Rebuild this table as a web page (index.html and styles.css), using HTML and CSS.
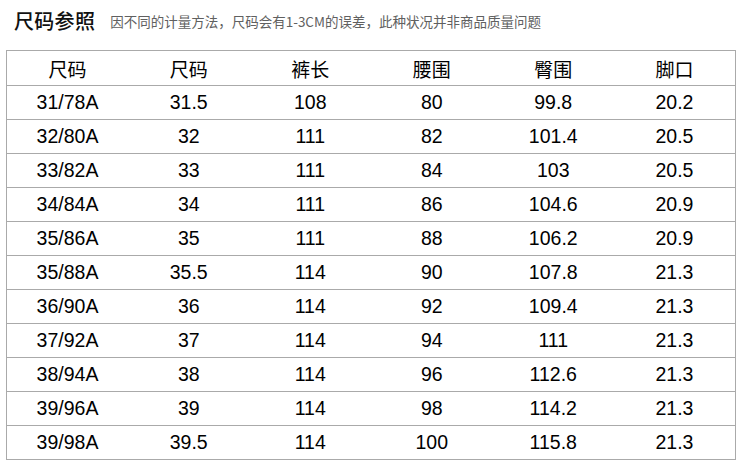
FILE: index.html
```html
<!DOCTYPE html>
<html lang="zh">
<head>
<meta charset="utf-8">
<link rel="stylesheet" href="styles.css">
</head>
<body>
<div class="page">
  <div class="heading">
    <span class="title">尺码参照</span>
    <span class="note">因不同的计量方法，尺码会有1-3CM的误差，此种状况并非商品质量问题</span>
  </div>
  <table class="sizes">
    <thead>
      <tr><th>尺码</th><th>尺码</th><th>裤长</th><th>腰围</th><th>臀围</th><th>脚口</th></tr>
    </thead>
    <tbody>
      <tr><td>31/78A</td><td>31.5</td><td>108</td><td>80</td><td>99.8</td><td>20.2</td></tr>
      <tr><td>32/80A</td><td>32</td><td>111</td><td>82</td><td>101.4</td><td>20.5</td></tr>
      <tr><td>33/82A</td><td>33</td><td>111</td><td>84</td><td>103</td><td>20.5</td></tr>
      <tr><td>34/84A</td><td>34</td><td>111</td><td>86</td><td>104.6</td><td>20.9</td></tr>
      <tr><td>35/86A</td><td>35</td><td>111</td><td>88</td><td>106.2</td><td>20.9</td></tr>
      <tr><td>35/88A</td><td>35.5</td><td>114</td><td>90</td><td>107.8</td><td>21.3</td></tr>
      <tr><td>36/90A</td><td>36</td><td>114</td><td>92</td><td>109.4</td><td>21.3</td></tr>
      <tr><td>37/92A</td><td>37</td><td>114</td><td>94</td><td>111</td><td>21.3</td></tr>
      <tr><td>38/94A</td><td>38</td><td>114</td><td>96</td><td>112.6</td><td>21.3</td></tr>
      <tr><td>39/96A</td><td>39</td><td>114</td><td>98</td><td>114.2</td><td>21.3</td></tr>
      <tr><td>39/98A</td><td>39.5</td><td>114</td><td>100</td><td>115.8</td><td>21.3</td></tr>
    </tbody>
  </table>
</div>
</body>
</html>
```
FILE: styles.css
```css
html, body {
  margin: 0;
  padding: 0;
  background: #ffffff;
}
.page {
  padding: 0 0 0 6px;
  font-family: "Liberation Sans", Arial, "Noto Sans CJK SC", sans-serif;
  color: #000;
}
.heading {
  height: 50px;
  display: flex;
  align-items: center;
  padding-left: 8px;
  box-sizing: border-box;
  padding-bottom: 10px;
}
.title {
  font-family: "Noto Sans CJK SC", sans-serif;
  font-size: 20px;
  font-weight: 500;
  color: #111;
  letter-spacing: 0.3px;
}
.note {
  font-family: "Noto Sans CJK SC", sans-serif;
  font-size: 13.5px;
  color: #606060;
  margin-left: 15px;
  margin-top: 2px;
}
.sizes {
  width: 730px;
  border-collapse: collapse;
  table-layout: fixed;
  border: 1px solid #aaaaaa;
}
.sizes th, .sizes td {
  height: 33px;
  padding: 0;
  text-align: center;
  vertical-align: middle;
  border-top: 1px solid #aaaaaa;
  font-size: 19.5px;
  font-weight: normal;
}
.sizes th {
  font-family: "Noto Sans CJK SC", sans-serif;
  font-size: 19px;
  height: 34px;
}
```
